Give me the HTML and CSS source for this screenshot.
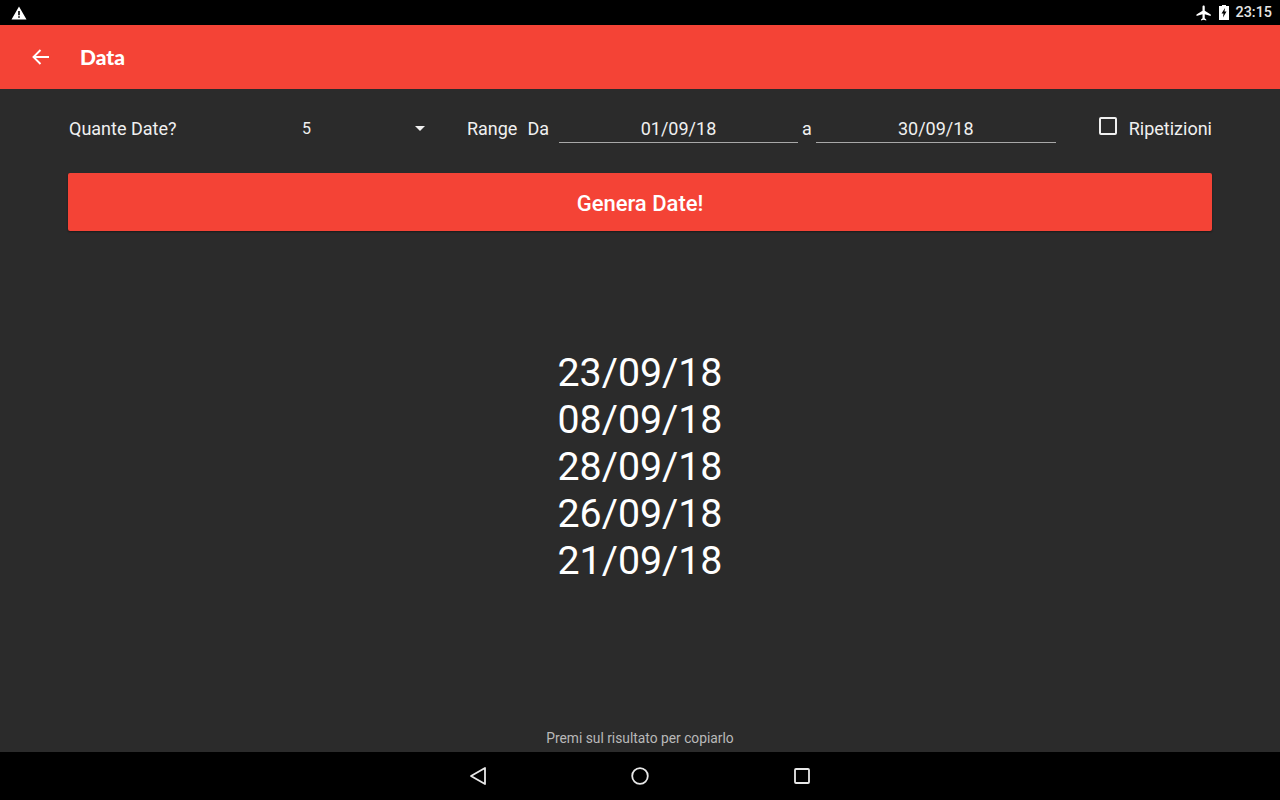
FILE: index.html
```html
<html>
<head>
    <title>Data</title>
    <link rel="stylesheet" href="styles.css">
</head>
<body>
    <div class="status-bar">
        <svg class="warn" width="16" height="14" viewBox="0 0 16 14">
            <path fill="#fff" fill-rule="evenodd" d="M8 0.5L15.5 13.5H0.5ZM7.2 5V9.2H8.8V5ZM7.2 10.2V11.8H8.8V10.2Z"/>
        </svg>
        <div class="status-right">
            <svg class="plane" width="18" height="18" viewBox="0 0 24 24">
                <path fill="#fff" d="M21 16v-2l-8-5V3.5C13 2.67 12.33 2 11.5 2S10 2.67 10 3.5V9l-8 5v2l8-2.5V19l-2 1.5V22l3.5-1 3.5 1v-1.5L13 19v-5.500z"/>
            </svg>
            <svg class="battery" width="10" height="15" viewBox="0 0 10 15">
                <path fill="#fff" fill-rule="evenodd" d="M3 0H7V1H10V15H0V1H3ZM6 3L2.500 8.500H4.500L4 12.500L7.500 6.500H5.500Z"/>
            </svg>
            <span class="clock">23:15</span>
        </div>
    </div>
    <div class="app-bar">
        <svg class="back" width="18" height="16" viewBox="0 0 18 16">
            <path fill="none" stroke="#fff" stroke-width="1.900" d="M17 8H2M8.500 1L1.500 8L8.500 15"/>
        </svg>
        <span class="title">Data</span>
    </div>
    <div class="content">
        <div class="controls">
            <span class="label quante">Quante Date?</span>
            <div class="spinner">
                <span class="spinner-value">5</span>
                <span class="spinner-arrow"></span>
            </div>
            <span class="label range">Range</span>
            <span class="label da">Da</span>
            <div class="date-input first">01/09/18</div>
            <span class="label a">a</span>
            <div class="date-input second">30/09/18</div>
            <span class="checkbox"></span>
            <span class="label">Ripetizioni</span>
        </div>
        <button class="generate">Genera Date!</button>
        <div class="results">
            <div>23/09/18</div>
            <div>08/09/18</div>
            <div>28/09/18</div>
            <div>26/09/18</div>
            <div>21/09/18</div>
        </div>
        <div class="hint">Premi sul risultato per copiarlo</div>
    </div>
    <div class="nav-bar">
        <svg width="18" height="20" viewBox="0 0 18 20">
            <path fill="none" stroke="#e8e8e8" stroke-width="1.800" stroke-linejoin="round" d="M16 2V18L2 10Z"/>
        </svg>
        <svg width="18" height="18" viewBox="0 0 18 18">
            <circle cx="9" cy="9" r="7.800" fill="none" stroke="#e8e8e8" stroke-width="1.800"/>
        </svg>
        <svg class="recents" width="16" height="16" viewBox="0 0 16 16">
            <rect x="1" y="1" width="14" height="14" rx="1" fill="none" stroke="#e8e8e8" stroke-width="1.800"/>
        </svg>
    </div>
</body>
</html>
```

FILE: styles.css
```css
html, body {
  margin: 0;
  height: 800px;
  overflow: hidden;
}
body {
  display: flex;
  flex-direction: column;
  background: #2b2b2b;
  font-family: Roboto, sans-serif;
  color: #fff;
}
.status-bar {
  height: 25px;
  background: #000;
  display: flex;
  align-items: center;
  justify-content: space-between;
  padding: 0 8px 0 11px;
}
.status-right {
  display: flex;
  align-items: center;
}
.plane {
  margin-left: -1px;
}
.battery {
  margin: 0 6px 0 6px;
}
.clock {
  font-size: 14.400px;
  font-weight: 500;
  color: #e4e4e4;
}
.app-bar {
  height: 64px;
  background: #f44336;
  display: flex;
  align-items: center;
  padding-left: 32px;
}
.title {
  margin: -2px 0 0 30px;
  font-family: Lato, sans-serif;
  font-size: 21px;
  font-weight: 900;
}
.content {
  flex: 1;
  display: flex;
  flex-direction: column;
  padding: 0 68px;
}
.controls {
  height: 78px;
  padding-bottom: 6px;
  display: flex;
  align-items: center;
  font-size: 18px;
  color: #f0f0f0;
}
.label {
  white-space: nowrap;
}
.quante {
  width: 233px;
  padding-left: 1px;
  box-sizing: border-box;
}
.spinner {
  width: 125px;
  display: flex;
  align-items: center;
  justify-content: space-between;
  font-size: 16px;
}
.spinner-value {
  margin-left: 1px;
}
.spinner-arrow {
  width: 0;
  height: 0;
  margin-right: 1px;
  border-left: 5px solid transparent;
  border-right: 5px solid transparent;
  border-top: 5px solid #f0f0f0;
}
.range {
  margin-left: 41px;
}
.da {
  margin-left: 10px;
}
.date-input {
  height: 27px;
  padding-top: 2px;
  line-height: 27px;
  text-align: center;
  border-bottom: 1px solid #a8a8a8;
}
.first {
  width: 239px;
  margin-left: 10px;
}
.a {
  margin-left: 4px;
}
.second {
  width: 240px;
  margin-left: 4px;
}
.checkbox {
  width: 14px;
  height: 14px;
  border: 2px solid #f0f0f0;
  border-radius: 2px;
  margin: -4px 12px 0 43px;
}
.generate {
  height: 58px;
  padding-top: 4px;
  border: none;
  border-radius: 2px;
  background: #f44336;
  color: #fff;
  font-family: Roboto, sans-serif;
  font-size: 22px;
  font-weight: 500;
  box-shadow: 0 1px 2px rgba(0, 0, 0, 0.4);
}
.results {
  margin-top: 119px;
  text-align: center;
  font-size: 39.300px;
  line-height: 47px;
}
.hint {
  margin-top: auto;
  height: 22px;
  text-align: center;
  font-size: 13.800px;
  color: #b9b9b9;
}
.nav-bar {
  height: 48px;
  background: #000;
  display: flex;
  align-items: center;
  justify-content: center;
  gap: 144px;
  padding-right: 1px;
}
.recents {
  margin-left: 1px;
}
```
